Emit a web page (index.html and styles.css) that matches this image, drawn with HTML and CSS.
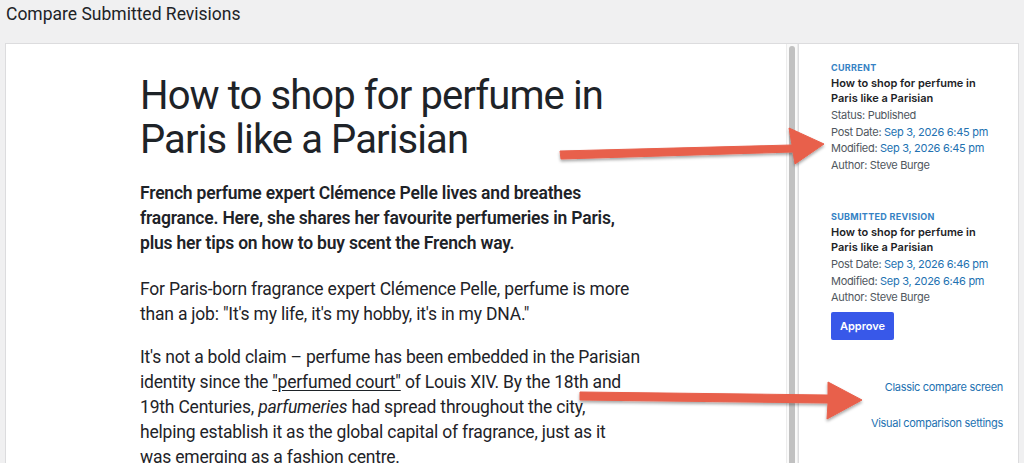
FILE: index.html
```html
<!DOCTYPE html>
<html lang="en">
<head>
  <meta charset="UTF-8" />
  <title>Compare Submitted Revisions</title>
  <link rel="stylesheet" href="styles.css">
</head>
<body>
  <h1 class="page-title">Compare Submitted Revisions</h1>

  <div class="compare-frame">
    <div class="preview">
      <article class="post">
        <h2>How to shop for perfume in Paris like a Parisian</h2>
        <p class="intro">French perfume expert Clémence Pelle lives and breathes fragrance. Here, she shares her favourite perfumeries in Paris, plus her tips on how to buy scent the French way.</p>
        <p>For Paris-born fragrance expert Clémence Pelle, perfume is more than a job: "It's my life, it's my hobby, it's in my DNA."</p>
        <p>It's not a bold claim – perfume has been embedded in the Parisian identity since the <a href="#">"perfumed court"</a> of Louis XIV. By the 18th and 19th Centuries, <em>parfumeries</em> had spread throughout the city, helping establish it as the global capital of fragrance, just as it <span class="nowrap">was emerging</span> as a fashion centre.</p>
      </article>
    </div>
    <div class="scrollbar"><div class="thumb"></div></div>

    <aside class="sidebar">
      <div class="rev-block">
        <div class="rev-label">Current</div>
        <div class="rev-title">How to shop for perfume in Paris like a Parisian</div>
        <div class="rev-meta">Status: Published</div>
        <div class="rev-meta">Post Date: <a href="#">Sep 3, 2026 6:45 pm</a></div>
        <div class="rev-meta">Modified: <a href="#">Sep 3, 2026 6:45 pm</a></div>
        <div class="rev-meta">Author: Steve Burge</div>
      </div>

      <div class="rev-block submitted">
        <div class="rev-label">Submitted Revision</div>
        <div class="rev-title">How to shop for perfume in Paris like a Parisian</div>
        <div class="rev-meta">Post Date: <a href="#">Sep 3, 2026 6:46 pm</a></div>
        <div class="rev-meta">Modified: <a href="#">Sep 3, 2026 6:46 pm</a></div>
        <div class="rev-meta">Author: Steve Burge</div>
        <button class="approve-btn">Approve</button>
      </div>

      <div class="side-links">
        <a href="#">Classic compare screen</a>
        <a href="#">Visual comparison settings</a>
      </div>
    </aside>
  </div>

  <!-- annotation arrows drawn over the screenshot -->
  <svg class="arrows" width="1024" height="463" viewBox="0 0 1024 463">
    <defs>
      <filter id="shadow" x="-10%" y="-50%" width="120%" height="200%">
        <feDropShadow dx="0" dy="2" stdDeviation="1.5" flood-color="#000" flood-opacity="0.35"/>
      </filter>
    </defs>
    <g fill="#e8604c" filter="url(#shadow)">
      <path d="M560 151 L792 145 L789 128 L824 144 L795 164 L793 152 L561 159 Z" stroke="#e8604c" stroke-width="1" stroke-linejoin="round"/>
      <path d="M580 392 L828 395 L828 382 L862 400 L827 419 L828 403 L580 400 Z" stroke="#e8604c" stroke-width="1" stroke-linejoin="round"/>
    </g>
  </svg>
</body>
</html>
```

FILE: styles.css
```css
* {
  box-sizing: border-box;
}
body {
  margin: 0;
  background: #f0f0f1;
  font-family: Inter, "Noto Sans", sans-serif;
  color: #1d2327;
  height: 463px;
  overflow: hidden;
  position: relative;
}
.page-title {
  margin: 0;
  padding: 4px 6px 0;
  height: 43px;
  font-family: Roboto, sans-serif;
  font-size: 17.5px;
  font-weight: 400;
  color: #1d2327;
}
.compare-frame {
  display: flex;
  margin: 0 5px;
  height: 440px;
  border: 1px solid #dcdcde;
  background: #fff;
}
.preview {
  flex: 1;
  overflow: hidden;
  padding: 30px 0 0 134px;
}
.post {
  width: 502px;
  color: #1e2328;
  font-family: Roboto, sans-serif;
}
.post h2 {
  margin: 0 0 19px;
  font-size: 40px;
  font-weight: 400;
  line-height: 44px;
  letter-spacing: -0.9px;
}
.post p {
  margin: 0 0 18px;
  font-size: 17.5px;
  line-height: 25px;
  letter-spacing: -0.2px;
}
.post .intro {
  font-weight: 600;
  margin-bottom: 21px;
}
.post a {
  color: #1e2328;
  text-decoration: underline;
  text-underline-offset: 2px;
}
.nowrap {
  white-space: nowrap;
}
.scrollbar {
  width: 12px;
  background: #fafafa;
  border-left: 1px solid #ececec;
  border-right: 1px solid #ececec;
  padding: 2px 2px 0;
}
.thumb {
  height: 500px;
  background: #c1c1c1;
  border-radius: 4px;
}
.sidebar {
  width: 220px;
  border-left: 1px solid #dcdcde;
  padding: 18px 15px 0 32px;
  font-size: 11px;
  color: #50575e;
}
.rev-block {
  margin-bottom: 38px;
}
.rev-label {
  font-size: 9px;
  font-weight: 700;
  text-transform: uppercase;
  letter-spacing: 0.3px;
  color: #3582c4;
  margin-bottom: 3px;
}
.rev-title {
  font-weight: 600;
  color: #1d2327;
  line-height: 15px;
  margin-bottom: 1px;
}
.rev-meta {
  line-height: 16.5px;
  letter-spacing: -0.3px;
}
.rev-meta a {
  color: #2271b1;
  text-decoration: none;
}
.approve-btn {
  margin-top: 6px;
  padding: 0 9px;
  height: 28px;
  border: none;
  border-radius: 2px;
  background: #3858e9;
  color: #fff;
  font-family: inherit;
  font-size: 11px;
  font-weight: 600;
}
.submitted {
  margin-bottom: 40px;
}
.side-links {
  display: flex;
  flex-direction: column;
  align-items: flex-end;
  gap: 22px;
}
.side-links a {
  color: #2271b1;
  text-decoration: none;
  font-size: 11px;
  letter-spacing: -0.3px;
}
.arrows {
  position: absolute;
  top: 0;
  left: 0;
  pointer-events: none;
}
```
